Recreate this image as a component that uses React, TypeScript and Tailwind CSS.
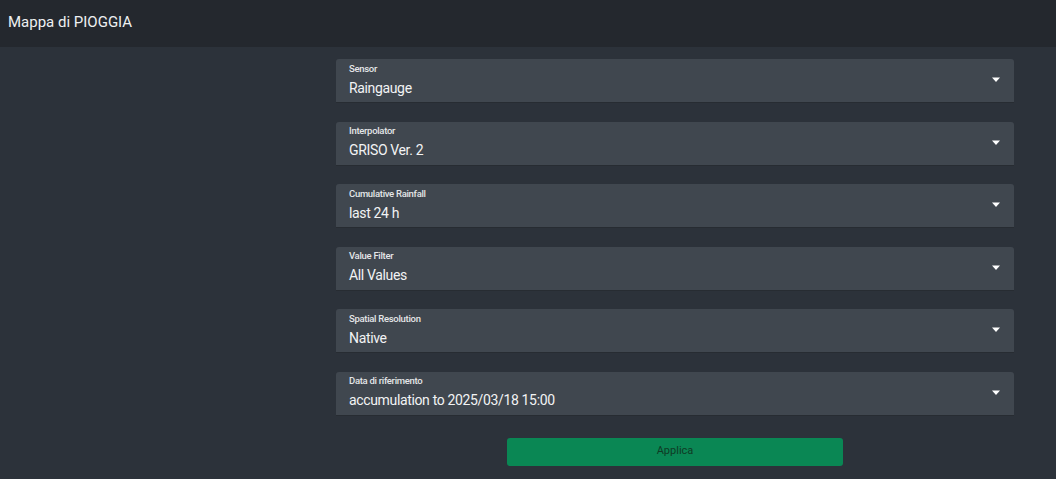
import React from "react";

const fields = [
  { label: "Sensor", value: "Raingauge" },
  { label: "Interpolator", value: "GRISO Ver. 2" },
  { label: "Cumulative Rainfall", value: "last 24 h" },
  { label: "Value Filter", value: "All Values" },
  { label: "Spatial Resolution", value: "Native" },
  { label: "Data di riferimento", value: "accumulation to 2025/03/18 15:00" },
];

function SelectField({ label, value }: { label: string; value: string }) {
  return (
    <div className="flex items-center h-[44px] bg-[#40474f] border-b border-[#272c32] rounded-t-[3px] pl-[13px] pr-[13px]">
      <div className="flex flex-col flex-1 -mt-[2px]">
        <span className="text-[9.5px] leading-[12px] tracking-[-0.3px] font-medium text-[#e4e6e8]">{label}</span>
        <span className="text-[14px] leading-[18px] tracking-[-0.35px] text-[#f2f3f4] mt-[4px]">{value}</span>
      </div>
      <svg width="10" height="6" viewBox="0 0 10 6" className="-mt-[1px]">
        <path d="M1 0.5 L9 0.5 L5 5 Z" fill="#ffffff" />
      </svg>
    </div>
  );
}

export default function App() {
  return (
    <div
      className="w-[1056px] h-[479px] bg-[#2c323a] flex flex-col overflow-hidden"
      style={{ fontFamily: 'Roboto, "Liberation Sans", sans-serif' }}
    >
      <div className="h-[47px] bg-[#24282e] flex items-center px-[8px] shrink-0">
        <h1 className="text-[15px] text-[#eef0f2] -mt-[2px]">Mappa di PIOGGIA</h1>
      </div>
      <div className="ml-[336px] w-[678px] pt-[12px] flex flex-col gap-[18.6px]">
        {fields.map((f, i) => (
          <SelectField key={i} label={f.label} value={f.value} />
        ))}
        <div className="flex justify-center mt-[3px]">
          <button className="w-[336px] h-[28px] rounded-[3px] bg-[#0a8754] text-[11px] text-[#0f3a24]">
            Applica
          </button>
        </div>
      </div>
    </div>
  );
}
